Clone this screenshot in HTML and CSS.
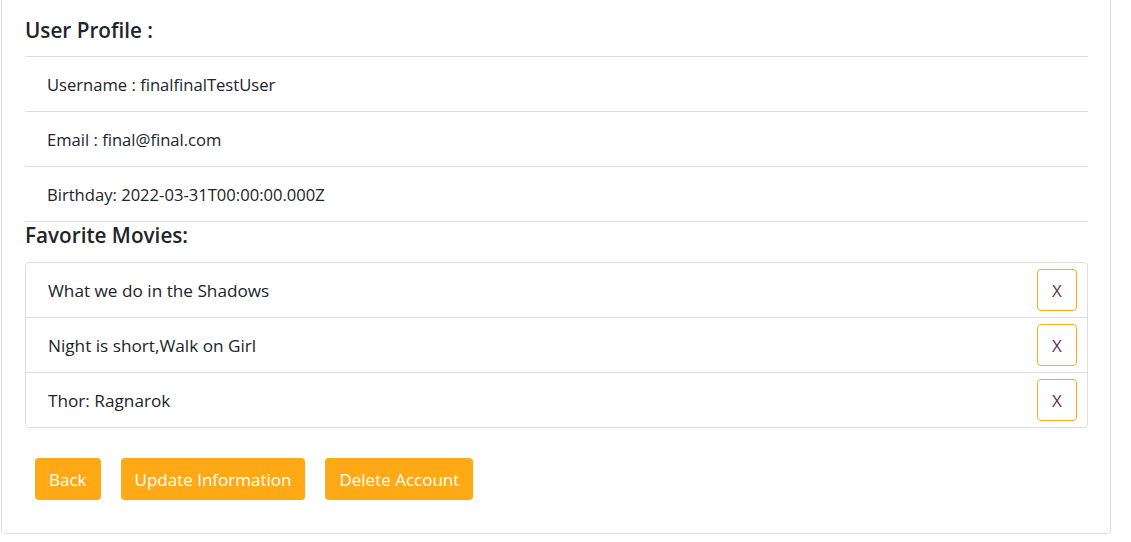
FILE: index.html
```html
<!DOCTYPE html>
<html lang="en">
<head>
<meta charset="utf-8">
<title>User Profile</title>
<link rel="stylesheet" href="styles.css">
</head>
<body>
<div class="card">
  <div class="card-body">
    <h4 class="title">User Profile :</h4>
    <ul class="info-list">
      <li class="info-item">Username : finalfinalTestUser</li>
      <li class="info-item">Email : final@final.com</li>
      <li class="info-item">Birthday: 2022-03-31T00:00:00.000Z</li>
    </ul>
    <h4 class="title fav-title">Favorite Movies:</h4>
    <ul class="movie-list">
      <li class="movie-item"><span>What we do in the Shadows</span><button class="remove-btn">X</button></li>
      <li class="movie-item"><span>Night is short,Walk on Girl</span><button class="remove-btn">X</button></li>
      <li class="movie-item"><span>Thor: Ragnarok</span><button class="remove-btn">X</button></li>
    </ul>
    <div class="actions">
      <button class="action-btn">Back</button>
      <button class="action-btn">Update Information</button>
      <button class="action-btn">Delete Account</button>
    </div>
  </div>
</div>
</body>
</html>
```
FILE: styles.css
```css
* { box-sizing: border-box; }
html, body { margin: 0; padding: 0; background: #fff; }
body {
  font-family: "Open Sans", "Noto Sans", "Liberation Sans", sans-serif;
  color: #212529;
  font-size: 16px;
}
.card {
  margin-left: 1px;
  width: 1110px;
  border: 1px solid #dcdcdc;
  border-top: 0;
  border-radius: 0 0 5px 5px;
}
.card-body {
  padding: 18px 22px 33px 23px;
}
.title {
  margin: 0;
  font-size: 20.7px;
  font-weight: 600;
  line-height: 24px;
  padding-bottom: 14px;
  border-bottom: 1px solid #dedede;
}
.fav-title {
  border-bottom: 0;
  padding-top: 1px;
  padding-bottom: 15px;
}
.info-list, .movie-list {
  list-style: none;
  margin: 0;
  padding: 0;
}
.info-item {
  height: 55px;
  display: flex;
  align-items: center;
  padding-left: 22px;
  border-bottom: 1px solid #dedede;
  font-size: 16.6px;
}
.movie-list {
  border: 1px solid #dedede;
  border-radius: 4px;
}
.movie-item {
  height: 55px;
  display: flex;
  align-items: center;
  justify-content: space-between;
  padding: 0 10px 0 22px;
  border-top: 1px solid #dedede;
  font-size: 17.2px;
}
.movie-item:first-child {
  border-top: 0;
  height: 54px;
}
.remove-btn {
  width: 40px;
  height: 42px;
  background: #fff;
  border: 1px solid #ffaa1c;
  border-radius: 4px;
  color: #6d2f5b;
  font-family: inherit;
  font-size: 17px;
  padding: 0;
  cursor: pointer;
}
.actions {
  display: flex;
  gap: 20px;
  padding: 30px 10px 0;
}
.action-btn {
  height: 42px;
  padding: 0 14px;
  background: #ffa916;
  color: #fff;
  border: 0;
  border-radius: 4px;
  font-family: inherit;
  font-size: 17px;
  cursor: pointer;
}
```
